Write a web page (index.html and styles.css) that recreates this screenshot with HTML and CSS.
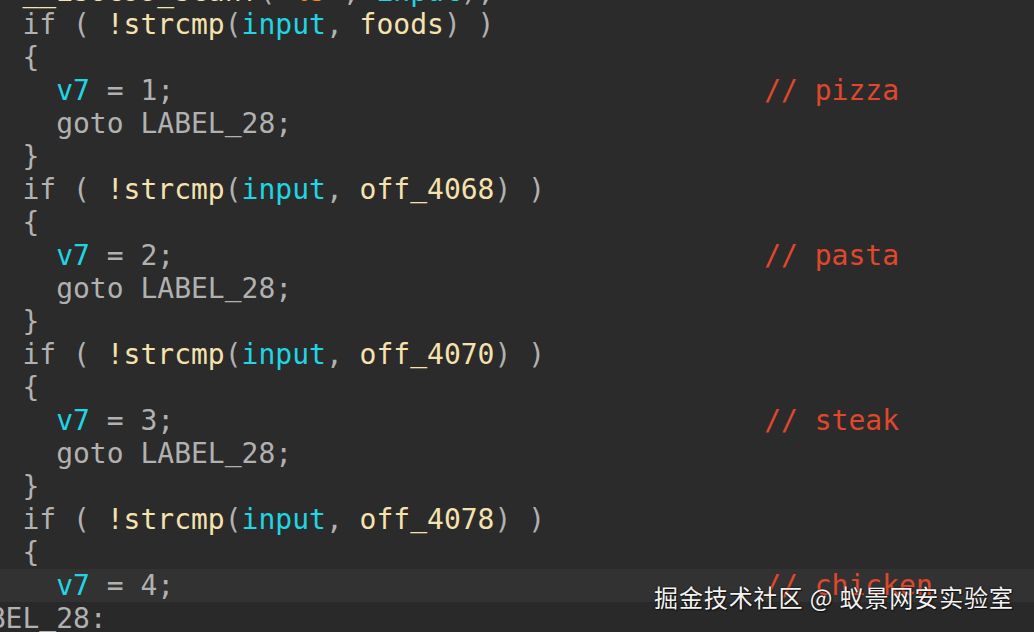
FILE: index.html
```html
<!DOCTYPE html>
<html>
<head>
<meta charset="utf-8">
<link rel="stylesheet" href="styles.css">
</head>
<body>
<div class="screen">
  <div class="code">
<div class="ln">    <span class="fn">__isoc99_scanf</span>(<span class="str">"%s"</span>, <span class="var">input</span>);</div>
<div class="ln">    if ( <span class="fn">!strcmp</span>(<span class="var">input</span>, <span class="fn">foods</span>) )</div>
<div class="ln">    {</div>
<div class="ln">      <span class="var">v7</span> = 1;                                   <span class="cmt">// pizza</span></div>
<div class="ln">      goto LABEL<span class="us">_</span>28;</div>
<div class="ln">    }</div>
<div class="ln">    if ( <span class="fn">!strcmp</span>(<span class="var">input</span>, <span class="fn">off<span class="us">_</span>4068</span>) )</div>
<div class="ln">    {</div>
<div class="ln">      <span class="var">v7</span> = 2;                                   <span class="cmt">// pasta</span></div>
<div class="ln">      goto LABEL<span class="us">_</span>28;</div>
<div class="ln">    }</div>
<div class="ln">    if ( <span class="fn">!strcmp</span>(<span class="var">input</span>, <span class="fn">off<span class="us">_</span>4070</span>) )</div>
<div class="ln">    {</div>
<div class="ln">      <span class="var">v7</span> = 3;                                   <span class="cmt">// steak</span></div>
<div class="ln">      goto LABEL<span class="us">_</span>28;</div>
<div class="ln">    }</div>
<div class="ln">    if ( <span class="fn">!strcmp</span>(<span class="var">input</span>, <span class="fn">off<span class="us">_</span>4078</span>) )</div>
<div class="ln">    {</div>
<div class="ln cur">      <span class="var">v7</span> = 4;                                   <span class="cmt">// chicken</span></div>
<div class="ln label">LABEL<span class="us">_</span>28:</div>
  </div>
  <div class="watermark">掘金技术社区 @ 蚁景网安实验室</div>
</div>
</body>
</html>
```

FILE: styles.css
```css
html, body {
  margin: 0;
  padding: 0;
  background: #2b2b2b;
}
.screen {
  position: relative;
  width: 1034px;
  height: 632px;
  overflow: hidden;
  background: #2b2b2b;
}
.code {
  margin-top: -25px;
  margin-left: -45px;
  font-family: "DejaVu Sans Mono", monospace;
  font-size: 28px;
  line-height: 33px;
  color: #b1b1b1;
}
.ln {
  white-space: pre;
  height: 33px;
}
.ln.cur {
  background: #323232;
}
.ln.label {
  background: #292929;
}
.us {
  position: relative;
  top: -3px;
}
.fn { color: #f6e2ae; }
.var { color: #1ed6e4; }
.str { color: #ff8a1c; }
.cmt { color: #e0472d; }
.watermark {
  position: absolute;
  left: 654px;
  top: 581px;
  font-family: "Noto Sans CJK SC", sans-serif;
  font-size: 24px;
  line-height: 32px;
  color: #f2f2f2;
  text-shadow: 0 0 2px rgba(0,0,0,0.8), 1px 1px 1px rgba(0,0,0,0.6);
  letter-spacing: 0.9px;
}
```
